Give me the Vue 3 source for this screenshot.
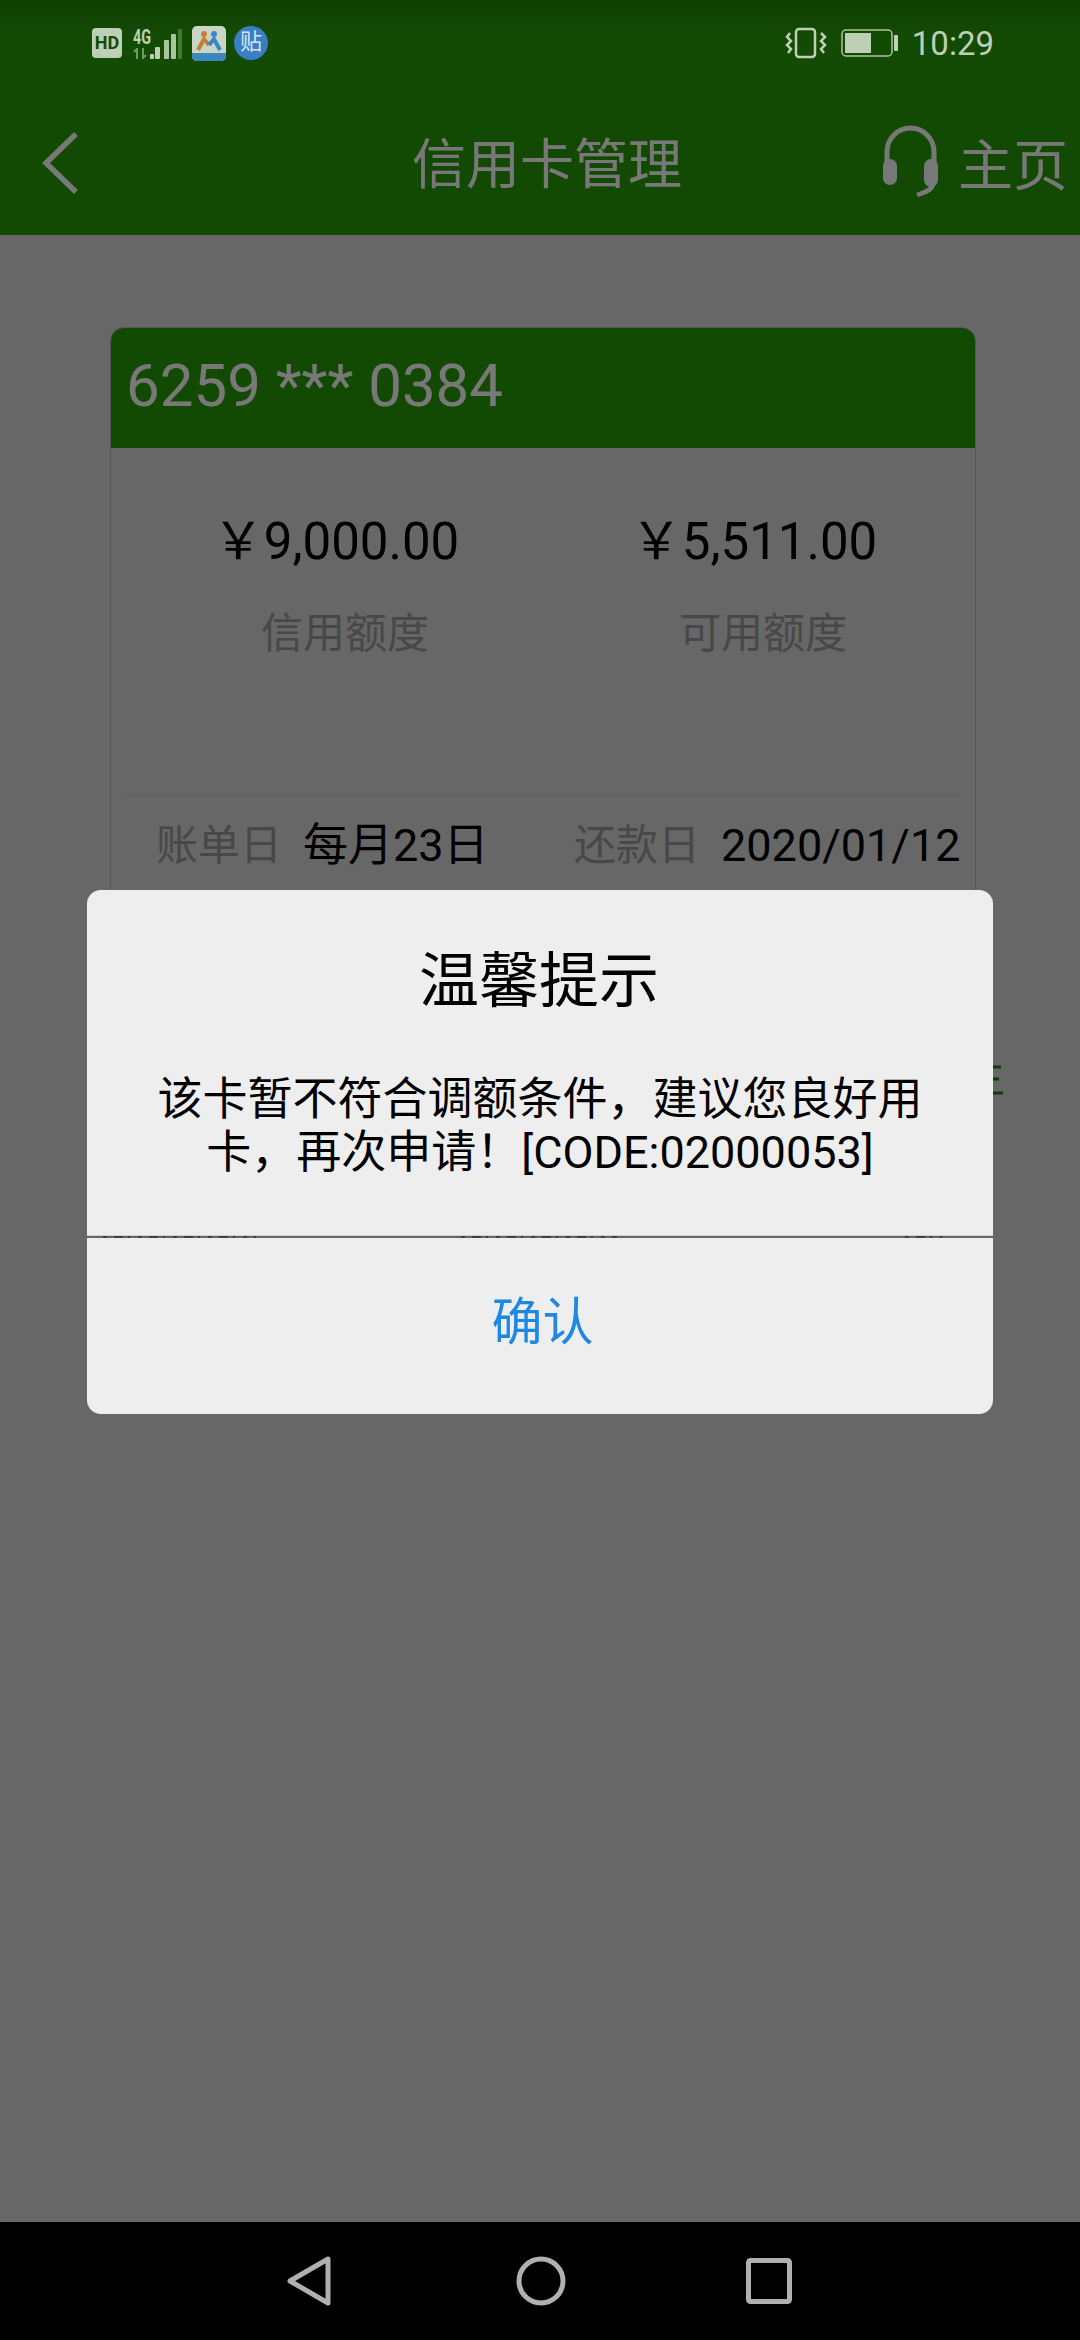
<script setup>
const stats = [
  { value: '￥9,000.00', label: '信用额度' },
  { value: '￥5,511.00', label: '可用额度' },
]

const dates = [
  { label: '账单日', value: '每月23日' },
  { label: '还款日', value: '2020/01/12' },
]
</script>

<template>
  <div class="page">
    <div class="app">
      <header class="app-bar">
        <div class="status-bar">
          <div class="status-left">
            <span class="hd">HD</span>
            <span class="net">
              <span class="net-text">4G</span>
              <svg class="net-arrows" width="16" height="11" viewBox="0 0 16 11">
                <path d="M4 11V1L1 4M10 0V10L13 7" fill="none" stroke="#6f9a64" stroke-width="2" />
              </svg>
            </span>
            <svg class="signal" width="32" height="30" viewBox="0 0 32 30">
              <rect x="0" y="25" width="4" height="5" rx="1" fill="#bdd0b5" />
              <rect x="5" y="18" width="5" height="12" rx="1" fill="#bdd0b5" />
              <rect x="14" y="11" width="5" height="19" rx="1" fill="#a9c4a0" />
              <rect x="21" y="5" width="5" height="25" rx="1" fill="#a9c4a0" />
              <rect x="28" y="0" width="4" height="30" fill="#3f7a30" />
            </svg>
            <svg class="app-icon" width="34" height="35" viewBox="0 0 34 35">
              <rect width="34" height="35" rx="5" fill="#c9d6c4" />
              <path d="M0 27H34V30A5 5 0 0 1 29 35H5A5 5 0 0 1 0 30Z" fill="#3c86c4" />
              <circle cx="12" cy="8" r="3" fill="#c97c3a" />
              <circle cx="22" cy="8" r="3" fill="#3c86c4" />
              <path d="M6 24L12 13L17 19" fill="none" stroke="#c97c3a" stroke-width="4" />
              <path d="M17 19L22 13L28 24" fill="none" stroke="#3c86c4" stroke-width="4" />
            </svg>
            <span class="tie">贴</span>
          </div>
          <div class="status-right">
            <svg width="42" height="32" viewBox="0 0 42 32">
              <rect x="11" y="2" width="19" height="28" rx="3" fill="none" stroke="#bdd0b5" stroke-width="2.5" />
              <path d="M5 6L2 10L6 14L2 18L6 22L3 26M36 6L40 10L36 14L40 18L36 22L39 26" fill="none" stroke="#bdd0b5" stroke-width="2.5" />
            </svg>
            <svg width="58" height="28" viewBox="0 0 58 28">
              <rect x="1" y="1" width="50" height="26" rx="4" fill="none" stroke="#a9c4a0" stroke-width="1.5" />
              <rect x="4" y="4" width="26" height="20" fill="#bdd0b5" />
              <rect x="53" y="6" width="4" height="16" rx="1" fill="#bdd0b5" />
            </svg>
            <span class="time">10:29</span>
          </div>
        </div>
        <div class="nav-row">
          <svg class="back" width="37" height="62" viewBox="0 0 37 62">
            <path d="M34 2L4 31L34 60" fill="none" stroke="#fff" stroke-width="5.5" />
          </svg>
          <h1 class="title">信用卡管理</h1>
          <div class="home">
            <svg width="55" height="72" viewBox="0 0 55 72">
              <path d="M4 38V27A23.5 24 0 0 1 51 27V38" fill="none" stroke="#fff" stroke-width="5" />
              <rect x="0" y="34" width="14" height="26" rx="7" fill="#fff" />
              <rect x="41" y="34" width="14" height="28" rx="7" fill="#fff" />
              <path d="M50 60C48 66 40 68 34 70" fill="none" stroke="#fff" stroke-width="4.5" />
            </svg>
            <span>主页</span>
          </div>
        </div>
      </header>

      <section class="card">
        <div class="card-no">6259 *** 0384</div>
        <div class="stats">
          <div v-for="item in stats" :key="item.label" class="stat">
            <div class="stat-value">{{ item.value }}</div>
            <div class="stat-label">{{ item.label }}</div>
          </div>
        </div>
        <div class="line"></div>
        <div class="dates">
          <div v-for="item in dates" :key="item.label" class="date">
            <span class="date-label">{{ item.label }}</span>
            <span class="date-value">{{ item.value }}</span>
          </div>
        </div>
      </section>

      <div class="scrim"></div>

      <!-- end of a green row that sticks out from behind the dialog -->
      <svg class="peek" width="14" height="32" viewBox="0 0 14 32">
        <path d="M0 2H8M0 14H6M0 28H10" stroke="#0e3d05" stroke-width="3" />
      </svg>

      <div class="dialog">
        <div class="dialog-main">
          <h2 class="dialog-title">温馨提示</h2>
          <p class="dialog-text">该卡暂不符合调额条件，建议您良好用卡，再次申请！[CODE:02000053]</p>
        </div>
        <div class="dialog-sep">
          <svg width="906" height="2" viewBox="0 0 906 2">
            <path d="M16 1H169M374 1H530M818 1H855" stroke="#333" stroke-width="1.5" stroke-dasharray="4 7 9 5 2 8" />
          </svg>
        </div>
        <div class="dialog-action">确认</div>
      </div>
    </div>

    <nav class="sys-nav">
      <svg width="46" height="52" viewBox="0 0 46 52">
        <path d="M42 4V48L4 26Z" fill="none" stroke="#b0b0b0" stroke-width="5" stroke-linejoin="round" />
      </svg>
      <svg width="50" height="50" viewBox="0 0 50 50">
        <circle cx="25" cy="25" r="22" fill="none" stroke="#b0b0b0" stroke-width="5" />
      </svg>
      <svg width="46" height="46" viewBox="0 0 46 46">
        <rect x="2.5" y="2.5" width="41" height="41" rx="2" fill="none" stroke="#b0b0b0" stroke-width="5" />
      </svg>
    </nav>
  </div>
</template>

<style>
html,
body {
  margin: 0;
  background: #000;
}
</style>

<style scoped>
.page {
  height: 2340px;
  display: flex;
  flex-direction: column;
  font-family: Roboto, "Noto Sans CJK SC", sans-serif;
}

.app {
  position: relative;
  flex: 1;
  background: #dadada;
  overflow: hidden;
}

.app-bar {
  height: 235px;
  background: #289d08;
  color: #fff;
}

.status-bar {
  position: relative;
  z-index: 2;
  height: 86px;
  box-sizing: border-box;
  padding: 0 86px 0 92px;
  display: flex;
  align-items: center;
  justify-content: space-between;
  background: linear-gradient(#0f3f03, #134a04 40%);
  color: #bdd0b5;
}

.status-left,
.status-right {
  display: flex;
  align-items: center;
}

.hd {
  width: 30px;
  height: 30px;
  border-radius: 4px;
  background: #bdd0b5;
  color: #134a04;
  font-size: 18px;
  font-weight: 700;
  line-height: 30px;
  text-align: center;
}

.net {
  width: 17px;
  margin-left: 11px;
  display: flex;
  flex-direction: column;
  gap: 2px;
}

.net-text {
  font-size: 20px;
  font-weight: 700;
  line-height: 18px;
  white-space: nowrap;
  transform: scaleX(0.72);
  transform-origin: left;
}

.net-arrows {
  display: block;
}

.signal {
  margin-top: 2px;
}

.app-icon {
  margin-left: 10px;
}

.tie {
  width: 34px;
  height: 34px;
  margin-left: 8px;
  border-radius: 50%;
  background: #3a7fc4;
  color: #d5e8f8;
  font-size: 22px;
  line-height: 32px;
  text-align: center;
}

.status-right {
  gap: 14px;
}

.time {
  font-size: 33px;
  margin-left: -1px;
}

.nav-row {
  height: 149px;
  display: grid;
  grid-template-columns: 200px 1fr 200px;
  align-items: center;
}

.back {
  margin-left: 42px;
  margin-top: 4px;
}

.title {
  margin: 0;
  padding-left: 14px;
  font-size: 54px;
  font-weight: 400;
  text-align: center;
}

.home {
  display: flex;
  align-items: center;
  justify-content: flex-end;
  gap: 20px;
  padding-right: 12px;
  font-size: 55px;
  white-space: nowrap;
}

.card {
  width: 866px;
  height: 1000px;
  box-sizing: border-box;
  margin: 92px 0 0 110px;
  border: 1px solid #b5b5b5;
  border-radius: 14px 14px 0 0;
  overflow: hidden;
}

.card-no {
  height: 120px;
  padding-left: 15px;
  background: #289d08;
  color: #fff;
  font-size: 60px;
  line-height: 116px;
}

.stats {
  display: grid;
  grid-template-columns: 418px 418px;
  padding: 64px 0 0 16px;
  text-align: center;
}

.stat-value {
  color: #000;
  font-size: 51px;
  line-height: 60px;
}

.stat-label {
  margin-top: 37px;
  padding-left: 18px;
  color: #999;
  font-size: 42px;
  line-height: 50px;
}

.line {
  height: 1px;
  margin: 136px 15px 0;
  background: #c4c4c4;
}

.dates {
  display: grid;
  grid-template-columns: 418px 1fr;
  margin-top: 20px;
  padding-left: 45px;
}

.date {
  display: flex;
  align-items: center;
  gap: 21px;
  line-height: 60px;
  white-space: nowrap;
}

.date-label {
  color: #999;
  font-size: 42px;
}

.date-value {
  color: #000;
  font-size: 45px;
}

.scrim {
  position: absolute;
  inset: 0;
  background: rgba(0, 0, 0, 0.53);
}

.peek {
  position: absolute;
  left: 993px;
  top: 1065px;
}

.dialog {
  position: absolute;
  left: 87px;
  top: 890px;
  width: 906px;
  height: 524px;
  display: flex;
  flex-direction: column;
  border-radius: 14px;
  overflow: hidden;
}

.dialog-main {
  height: 345px;
  box-sizing: border-box;
  padding-top: 50px;
  background: #eee;
  color: #000;
  text-align: center;
}

.dialog-title {
  margin: 0;
  padding-right: 2px;
  font-size: 60px;
  font-weight: 400;
  line-height: 84px;
}

.dialog-text {
  width: 780px;
  margin: 50px auto 0;
  font-size: 45px;
  line-height: 52.5px;
}

.dialog-sep {
  height: 3px;
  box-sizing: border-box;
  border-top: 1px solid #d0d0d0;
  background: #666;
}

.dialog-sep svg {
  display: block;
}

.dialog-action {
  flex: 1;
  padding: 3px 0 0 5px;
  background: #eee;
  color: #1e88e5;
  font-size: 51px;
  line-height: 164px;
  text-align: center;
}

.sys-nav {
  position: relative;
  height: 118px;
  box-sizing: border-box;
  padding-left: 286px;
  background: #000;
  display: flex;
  align-items: center;
}

.sys-nav svg:nth-child(2) {
  margin-left: 184px;
}

.sys-nav svg:nth-child(3) {
  margin-left: 180px;
}
</style>
